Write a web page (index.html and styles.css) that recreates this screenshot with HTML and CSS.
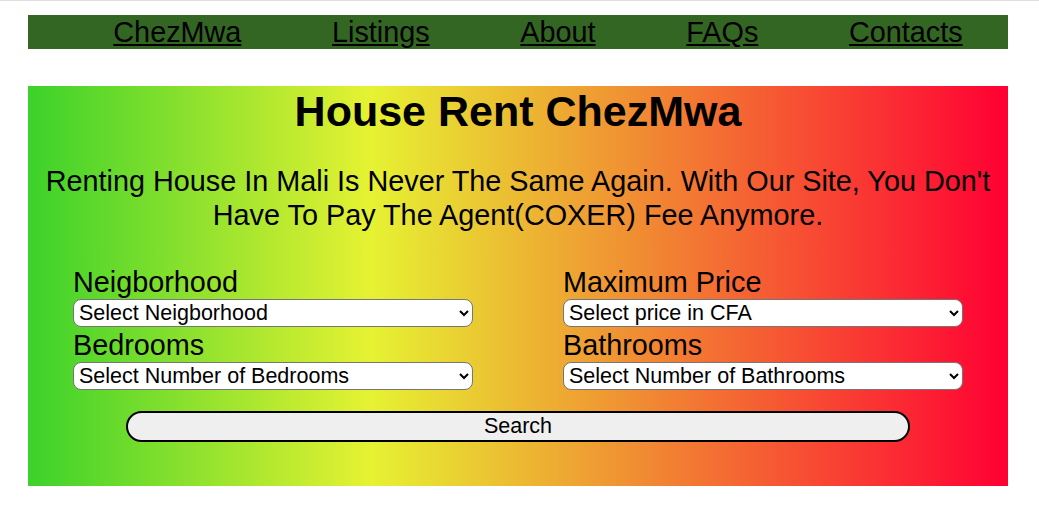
FILE: index.html
```html
<!DOCTYPE html>
<html>
<head>
<meta charset="utf-8">
<title>House Rent ChezMwa</title>
<link rel="stylesheet" href="styles.css">
</head>
<body>
<header class="topbar">
  <nav class="nav">
    <ul class="nav-list">
      <li><a href="#">ChezMwa</a></li>
      <li><a href="#">Listings</a></li>
      <li><a href="#">About</a></li>
      <li><a href="#">FAQs</a></li>
      <li><a href="#">Contacts</a></li>
    </ul>
  </nav>
</header>
<main class="hero">
  <h1 class="hero-title">House Rent ChezMwa</h1>
  <p class="hero-text">Renting House In Mali Is Never The Same Again. With Our Site, You Don't Have To Pay The Agent(COXER) Fee Anymore.</p>
  <form class="search-form">
    <div class="fields">
      <div class="col">
        <label class="field-label">Neigborhood</label>
        <select class="field-select"><option>Select Neigborhood</option></select>
        <label class="field-label">Bedrooms</label>
        <select class="field-select"><option>Select Number of Bedrooms</option></select>
      </div>
      <div class="col">
        <label class="field-label">Maximum Price</label>
        <select class="field-select"><option>Select price in CFA</option></select>
        <label class="field-label">Bathrooms</label>
        <select class="field-select"><option>Select Number of Bathrooms</option></select>
      </div>
    </div>
    <button type="button" class="search-btn">Search</button>
  </form>
</main>
</body>
</html>
```
FILE: styles.css
```css
html, body {
  margin: 0;
  padding: 0;
  background: #ffffff;
}
body {
  border-top: 1px solid #dedede;
  padding: 14px 31px 0 28px;
  font-family: "Liberation Sans", Arial, sans-serif;
  color: #000;
}
.topbar {
  margin: 0;
}
.nav {
  background: #336622;
  height: 34px;
}
.nav-list {
  list-style: none;
  margin: 0;
  padding: 0 0 0 40px;
  display: flex;
  justify-content: space-around;
  align-items: center;
  height: 34px;
}
.nav-list li {
  font-size: 28.8px;
  line-height: 34px;
}
.nav-list a {
  color: #000;
  text-decoration: underline;
}
.hero {
  margin-top: 37px;
  height: 400px;
  background: linear-gradient(to right, #3cd22a 0%, #e6f232 35%, #ff0033 100%);
  display: flex;
  flex-direction: column;
  align-items: center;
}
.hero-title {
  margin: 0;
  font-size: 43px;
  line-height: 50px;
  font-weight: bold;
  text-align: center;
}
.hero-text {
  margin: 28px 0 0;
  padding: 0 10px;
  font-size: 28.8px;
  line-height: 34px;
  text-align: center;
}
.search-form {
  width: 100%;
  margin-top: 34px;
  display: flex;
  flex-direction: column;
  align-items: center;
}
.fields {
  width: 100%;
  display: grid;
  grid-template-columns: 1fr 1fr;
}
.col {
  display: flex;
  flex-direction: column;
  align-items: flex-start;
  padding-left: 45px;
}
.field-label {
  font-size: 28.8px;
  line-height: 33px;
}
.field-select {
  width: 400px;
  height: 28px;
  margin: 0 0 2px;
  font-family: "Liberation Sans", Arial, sans-serif;
  font-size: 21.5px;
  border: 1px solid #767676;
  border-radius: 8px;
  background: #fff;
  color: #000;
  padding: 0 1px;
}
.search-btn {
  margin-top: 19px;
  width: 80%;
  height: 31px;
  border: 2px solid #000;
  border-radius: 16px;
  background: #efefef;
  font-family: "Liberation Sans", Arial, sans-serif;
  font-size: 21.5px;
  color: #000;
}
```
